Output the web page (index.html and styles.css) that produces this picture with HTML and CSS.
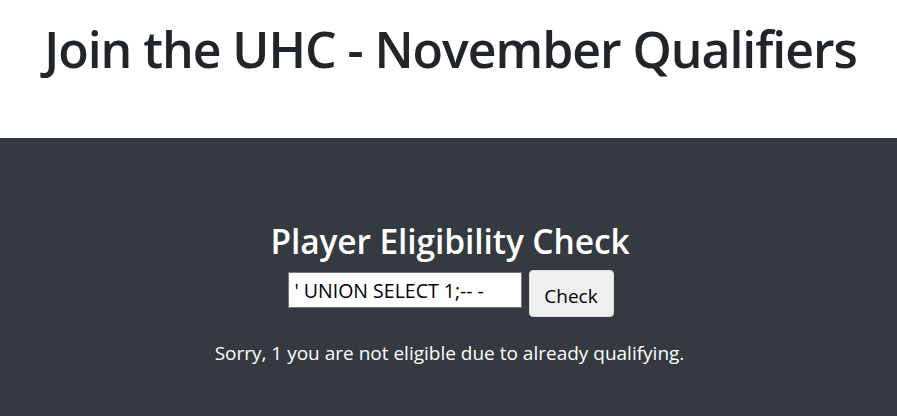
FILE: index.html
```html
<!DOCTYPE html>
<html lang="en">
<head>
<meta charset="utf-8">
<title>Join the UHC - November Qualifiers</title>
<link rel="stylesheet" href="styles.css">
</head>
<body>
<header class="hero">
  <h1 class="hero-title">Join the UHC - November Qualifiers</h1>
</header>
<main class="panel">
  <h2 class="panel-title">Player Eligibility Check</h2>
  <form class="check-form">
    <input class="check-input" type="text" name="player" value="' UNION SELECT 1;-- -">
    <button class="check-btn" type="button">Check</button>
  </form>
  <p class="result">Sorry, 1 you are not eligible due to already qualifying.</p>
</main>
</body>
</html>
```
FILE: styles.css
```css
html, body {
  margin: 0;
  padding: 0;
}
body {
  font-family: "Open Sans", "Noto Sans", sans-serif;
  color: #212529;
  background: #343a40;
}
.hero {
  background: #fff;
  height: 138px;
  display: flex;
  justify-content: center;
  padding-top: 19px;
  padding-left: 4px;
  box-sizing: border-box;
}
.hero-title {
  margin: 0;
  font-size: 50px;
  font-weight: 600;
  line-height: 1.2;
  letter-spacing: -1.05px;
}
.panel {
  display: flex;
  flex-direction: column;
  align-items: center;
  padding-top: 83px;
  color: #fff;
  min-height: 278px;
  box-sizing: border-box;
}
.panel-title {
  margin: 0;
  font-size: 33.5px;
  font-weight: 600;
  line-height: 1.2;
  letter-spacing: -0.1px;
  padding-left: 3px;
}
.check-form {
  display: flex;
  align-items: flex-start;
  gap: 7px;
  margin-top: 9px;
  margin-left: 4px;
}
.check-input {
  width: 234px;
  height: 36px;
  box-sizing: border-box;
  margin-top: 2px;
  border: 1px solid #767676;
  padding: 1px 6px;
  font-family: inherit;
  font-size: 19.5px;
  color: #000;
  background: #fff;
}
.check-btn {
  height: 47px;
  width: 85px;
  border: 1px solid #ddd;
  border-radius: 4px;
  background: #efefef;
  font-family: inherit;
  font-size: 19px;
  color: #000;
  padding: 4px 0 0;
}
.result {
  margin: 23px 0 0;
  font-size: 19px;
  padding-left: 2px;
}
```
